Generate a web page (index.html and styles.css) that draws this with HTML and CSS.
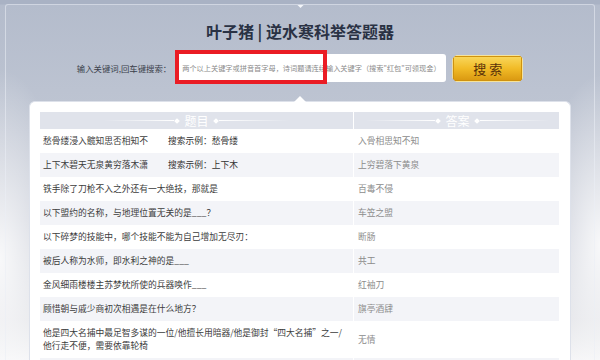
FILE: index.html
```html
<!DOCTYPE html>
<html lang="zh-CN">
<head>
    <meta charset="UTF-8">
    <title>叶子猪 | 逆水寒科举答题器</title>
    <link rel="stylesheet" href="styles.css">
</head>
<body>
    <div class="page">
        <h1 class="title">叶子猪 | 逆水寒科举答题器</h1>
        <div class="search">
            <label class="search-label">输入关键词,回车键搜索：</label>
            <div class="input-wrap">
                <input class="search-input" type="text" placeholder="两个以上关键字或拼音首字母，诗词题请连续输入关键字（搜索&quot;红包&quot;可领现金）">
                <div class="mark"></div>
            </div>
            <button class="search-btn">搜索</button>
        </div>
        <div class="panel">
            <div class="table">
                <div class="row head">
                    <div class="hcell"><i class="line"></i><i class="dia"></i><span>题目</span><i class="dia"></i><i class="line r"></i></div>
                    <div class="hcell ans"><i class="line"></i><i class="dia"></i><span>答案</span><i class="dia"></i><i class="line r"></i></div>
                </div>
                <div class="row">
                    <div class="q"><span class="q-text">愁骨缕浸入髋知思否相知不</span><span class="example">搜索示例：愁骨缕</span></div>
                    <div class="a">入骨相思知不知</div>
                </div>
                <div class="row alt">
                    <div class="q"><span class="q-text">上下木碧天无泉黄穷落木潇</span><span class="example">搜索示例：上下木</span></div>
                    <div class="a">上穷碧落下黄泉</div>
                </div>
                <div class="row">
                    <div class="q">铁手除了刀枪不入之外还有一大绝技，那就是</div>
                    <div class="a">百毒不侵</div>
                </div>
                <div class="row alt">
                    <div class="q">以下盟约的名称，与地理位置无关的是___？</div>
                    <div class="a">车笠之盟</div>
                </div>
                <div class="row">
                    <div class="q">以下碎梦的技能中，哪个技能不能为自己增加无尽刃：</div>
                    <div class="a">断肠</div>
                </div>
                <div class="row alt">
                    <div class="q">被后人称为水师，即水利之神的是___</div>
                    <div class="a">共工</div>
                </div>
                <div class="row">
                    <div class="q">金风细雨楼楼主苏梦枕所使的兵器唤作___</div>
                    <div class="a">红袖刀</div>
                </div>
                <div class="row alt">
                    <div class="q">顾惜朝与戚少商初次相遇是在什么地方？</div>
                    <div class="a">旗亭酒肆</div>
                </div>
                <div class="row tall">
                    <div class="q">他是四大名捕中最足智多谋的一位/他擅长用暗器/他是御封“四大名捕”之一/<br>他行走不便，需要依靠轮椅</div>
                    <div class="a">无情</div>
                </div>
                <div class="row alt">
                    <div class="q">&nbsp;</div>
                    <div class="a">&nbsp;</div>
                </div>
            </div>
        </div>
    </div>
</body>
</html>
```

FILE: styles.css
```css
html, body {
    margin: 0;
    padding: 0;
    height: 100%;
}
body {
    font-family: "Noto Sans CJK SC", "Noto Sans", sans-serif;
    overflow: hidden;
    background:
        radial-gradient(ellipse 70px 190px at 0% 72%, rgba(255, 255, 255, 0.85), rgba(255, 255, 255, 0)),
        radial-gradient(ellipse 60px 170px at 100% 68%, rgba(255, 255, 255, 0.85), rgba(255, 255, 255, 0)),
        linear-gradient(#a9b2c4 0, #a9b2c4 4px, #b4bccc 5px, #bcc3d1 90px, #c8ccd7 220px, #dfe0e5 320px, #f4f4f6 360px);
}
.page {
    position: relative;
    margin: 4px 5px 0;
    height: 355px;
    overflow: hidden;
    border: 1px solid rgba(235, 239, 246, 0.55);
    border-bottom: none;
    border-radius: 3px 3px 0 0;
}
.page::before {
    content: "";
    position: absolute;
    left: 292px;
    top: -3px;
    width: 5px;
    height: 5px;
    background: #f4f6fa;
    transform: rotate(45deg);
}
.title {
    margin: 16px 0 0;
    font-size: 16px;
    line-height: 20px;
    font-weight: bold;
    text-align: center;
    color: #2a3244;
}
.search {
    display: flex;
    justify-content: center;
    align-items: center;
    margin-top: 12px;
    height: 29px;
}
.search-label {
    font-size: 8.4px;
    color: #3a3f4b;
    margin-right: 5px;
}
.input-wrap {
    position: relative;
    margin-right: 6px;
}
.search-input {
    display: block;
    box-sizing: border-box;
    width: 270px;
    height: 28px;
    border: none;
    border-radius: 3px;
    padding: 0 0 0 6px;
    font-family: inherit;
    font-size: 7.2px;
    background: #fff;
    outline: none;
}
.search-input::placeholder {
    color: #8a8a8a;
}
.mark {
    position: absolute;
    left: -1px;
    top: -4px;
    width: 152px;
    height: 34px;
    box-sizing: border-box;
    border: 4px solid #ea1c24;
}
.search-btn {
    width: 71px;
    height: 27px;
    margin-top: 2px;
    padding: 0 0 0 3px;
    border: 1px solid #f6e39a;
    box-shadow: inset 0 0 0 1px #cf920f;
    background: linear-gradient(#f9d85e, #f1bb27 50%, #d99710);
    clip-path: polygon(4px 0, calc(100% - 4px) 0, 100% 4px, 100% calc(100% - 4px), calc(100% - 4px) 100%, 4px 100%, 0 calc(100% - 4px), 0 4px);
    font-family: inherit;
    font-size: 13px;
    letter-spacing: 3px;
    color: #5a320a;
    cursor: pointer;
}
.panel {
    position: relative;
    width: 542px;
    box-sizing: border-box;
    margin: 19px auto 0;
    padding: 10px 11px 0 10px;
    height: 280px;
    background: #fff;
    border: 1px solid #dde1ea;
    border-bottom: none;
    border-radius: 6px 6px 0 0;
}
.panel::before {
    content: "";
    position: absolute;
    left: 264px;
    top: -6px;
    width: 0;
    height: 0;
    border-left: 6px solid transparent;
    border-right: 6px solid transparent;
    border-bottom: 6px solid #fff;
}
.row {
    display: grid;
    grid-template-columns: 313px 208px;
    height: 24px;
    line-height: 24px;
    font-size: 8.75px;
    background: #fff;
}
.row.alt {
    background: #f3f4f8;
}
.row.tall {
    height: 37px;
    line-height: 13px;
}
.row.tall .q {
    padding-top: 5px;
}
.row.tall .a {
    line-height: 37px;
}
.row.head {
    height: 17px;
    line-height: 17px;
    background: #e0e3eb;
}
.hcell {
    display: flex;
    justify-content: center;
    align-items: center;
    color: #fff;
    font-size: 12px;
}
.hcell.ans {
    border-left: 1px solid #fff;
}
.hcell span {
    margin: 0 4px;
}
.line {
    display: block;
    width: 70px;
    height: 1px;
    background: linear-gradient(to right, rgba(255, 255, 255, 0), #fff);
}
.line.r {
    background: linear-gradient(to left, rgba(255, 255, 255, 0), #fff);
}
.dia {
    display: block;
    width: 4px;
    height: 4px;
    margin: 0 1px;
    background: #fff;
    transform: rotate(45deg);
}
.q {
    padding-left: 3px;
    color: #3c3c3c;
    white-space: nowrap;
}
.q-text {
    display: inline-block;
    width: 125px;
}
.example {
    color: #333;
}
.a {
    padding-left: 4px;
    color: #8c8c8c;
    border-left: 1px solid #fff;
}
```
